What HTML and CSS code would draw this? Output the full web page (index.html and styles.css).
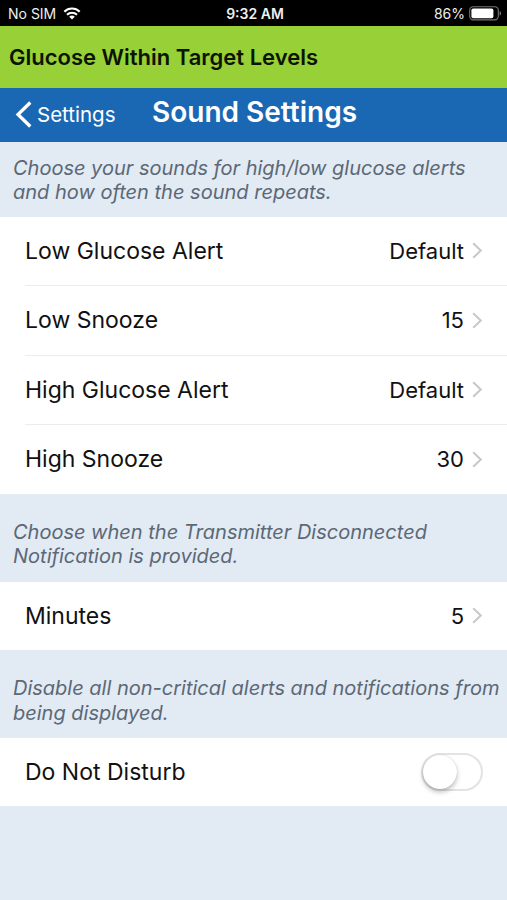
FILE: index.html
```html
<!DOCTYPE html>
<html lang="en">
<head>
<meta charset="utf-8">
<meta name="viewport" content="width=device-width, initial-scale=1">
<title>Sound Settings</title>
<link rel="stylesheet" href="styles.css">
</head>
<body>
<div class="status">
  <div class="status-left">
    <span class="carrier">No SIM</span>
    <svg class="wifi" width="18" height="13" viewBox="0 0 18 13" fill="none" stroke="#fff">
      <path d="M1.3 4.7a11 11 0 0 1 15.4 0" stroke-width="2.1"/>
      <path d="M4 7.7a7.2 7.2 0 0 1 10 0" stroke-width="2.1"/>
      <path d="M9 12.6 6.2 9.8a4 4 0 0 1 5.6 0z" fill="#fff" stroke="none"/>
    </svg>
  </div>
  <span class="clock">9:32 AM</span>
  <div class="status-right">
    <span class="percent">86%</span>
    <svg class="battery" width="33" height="15" viewBox="0 0 33 15">
      <rect x=".7" y=".7" width="28.6" height="13.2" rx="3.6" fill="none" stroke="#777" stroke-width="1.1"/>
      <rect x="2.4" y="2.4" width="22" height="9.8" rx="1.8" fill="#fff"/>
      <path d="M30.6 5v4.6c2-.8 2-3.800 0-4.600z" fill="#777"/>
    </svg>
  </div>
</div>
<div class="banner"><span class="banner-text">Glucose Within Target Levels</span></div>
<header class="nav">
  <a class="back">
    <svg width="17" height="27" viewBox="0 0 17 27" fill="none" stroke="#fff" stroke-width="3.300"><path d="M15.300 1.500 3 13.500l12.300 12"/></svg>
    <span class="back-text">Settings</span>
  </a>
  <h1 class="title">Sound Settings</h1>
</header>
<main>
  <p class="note note-first"><span class="n1">Choose your sounds for high/low glucose alerts</span><br><span class="n2">and how often the sound repeats.</span></p>
  <ul class="list">
    <li class="row"><span class="label l1">Low Glucose Alert</span><span class="value">Default</span><svg class="chev" width="11" height="17" viewBox="0 0 11 17"><path d="M1.200 1.200 8.800 8.500 1.200 15.800"/></svg></li>
    <li class="row"><span class="label l2">Low Snooze</span><span class="value">15</span><svg class="chev" width="11" height="17" viewBox="0 0 11 17"><path d="M1.200 1.200 8.800 8.500 1.200 15.800"/></svg></li>
    <li class="row"><span class="label l3">High Glucose Alert</span><span class="value">Default</span><svg class="chev" width="11" height="17" viewBox="0 0 11 17"><path d="M1.200 1.200 8.800 8.500 1.200 15.800"/></svg></li>
    <li class="row"><span class="label l4">High Snooze</span><span class="value">30</span><svg class="chev" width="11" height="17" viewBox="0 0 11 17"><path d="M1.200 1.200 8.800 8.500 1.200 15.800"/></svg></li>
  </ul>
  <p class="note"><span class="n3">Choose when the Transmitter Disconnected</span><br><span class="n4">Notification is provided.</span></p>
  <ul class="list">
    <li class="row row-single"><span class="label l5">Minutes</span><span class="value">5</span><svg class="chev" width="11" height="17" viewBox="0 0 11 17"><path d="M1.200 1.200 8.800 8.500 1.200 15.800"/></svg></li>
  </ul>
  <p class="note"><span class="n5">Disable all non-critical alerts and notifications from</span><br><span class="n6">being displayed.</span></p>
  <ul class="list">
    <li class="row row-single"><span class="label l6">Do Not Disturb</span><span class="switch"><span class="knob"></span></span></li>
  </ul>
</main>
</body>
</html>
```
FILE: styles.css
```css
* { box-sizing: border-box; }
body {
  margin: 0;
  min-height: 900px;
  background: #e2eaf3;
  color: #111;
  font-family: Inter, "Liberation Sans", sans-serif;
  white-space: nowrap;
}
.status {
  display: grid;
  grid-template-columns: 1fr auto 1fr;
  align-items: center;
  height: 25.5px;
  padding: 2px 5px 0 8px;
  background: #000;
  color: #eee;
  font-size: 14px;
  line-height: 20px;
}
.status-left { display: flex; align-items: center; gap: 7px; }
.status-right { display: flex; align-items: center; justify-content: flex-end; gap: 4px; }
.clock { font-weight: 600; }
.banner {
  display: flex;
  align-items: center;
  height: 62px;
  padding: 0 9px;
  background: #97d037;
  color: #0c1400;
  font-size: 22px;
  font-weight: 600;
}
.nav {
  display: flex;
  height: 54px;
  padding-left: 15px;
  background: #1a68b4;
  color: #fff;
}
.back { display: flex; align-items: center; gap: 5px; width: 137px; font-size: 20.500px; }
.title { margin: 0; font-size: 28px; line-height: 49px; font-weight: 600; }
.note {
  margin: 0;
  height: 88.300px;
  padding: 26.500px 13px 0;
  color: #5b6876;
  font-size: 20px;
  line-height: 24.300px;
  font-style: italic;
}
.note-first { height: 75px; padding-top: 14px; }
.list { margin: 0; padding: 0 0 0 25px; list-style: none; background: #fff; }
.row {
  display: flex;
  align-items: center;
  height: 69.500px;
  padding-right: 24px;
  border-bottom: 1.500px solid #ececee;
  font-size: 23px;
}
.row:last-child { border-bottom: 0; height: 68.500px; }
.row-single:last-child { height: 68px; }
.label { flex: 1; }
.value { font-size: 22px; }
.chev { margin-left: 8px; fill: none; stroke: #c8c8cc; stroke-width: 2; }
.switch {
  width: 62px;
  height: 38px;
  border: 2px solid #e3e3e4;
  border-radius: 19px;
}
.knob {
  display: block;
  width: 34px;
  height: 34px;
  border-radius: 50%;
  background: #fff;
  box-shadow: 0 3px 5px rgba(0, 0, 0, .25), 0 0 1px rgba(0, 0, 0, .2);
}
```
